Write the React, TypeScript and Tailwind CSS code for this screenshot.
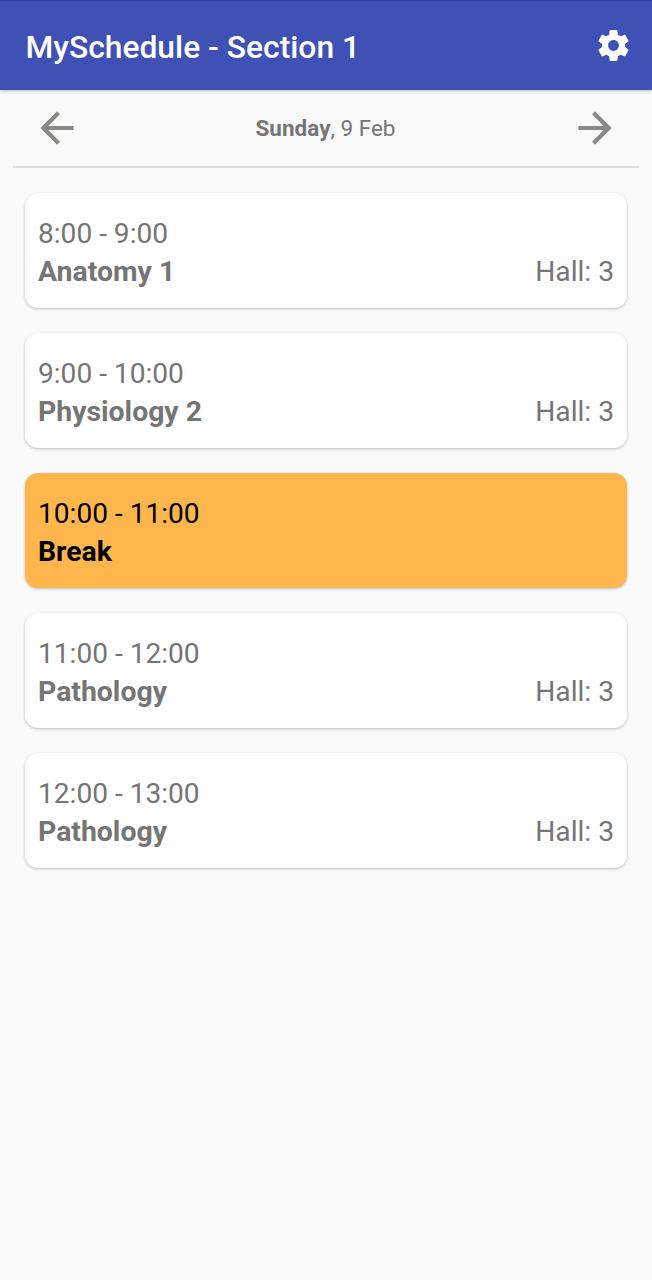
const GEAR =
  "M19.43 12.98c.04-.32.07-.64.07-.98s-.03-.66-.07-.98l2.11-1.65c.19-.15.24-.42.12-.64l-2-3.46c-.12-.22-.39-.3-.61-.22l-2.49 1c-.52-.4-1.08-.73-1.69-.98l-.38-2.65C14.46 2.18 14.25 2 14 2h-4c-.25 0-.46.18-.49.42l-.38 2.65c-.61.25-1.17.59-1.69.98l-2.49-1c-.23-.09-.49 0-.61.22l-2 3.46c-.13.22-.07.49.12.64l2.11 1.65c-.04.32-.07.65-.07.98s.03.66.07.98l-2.11 1.65c-.19.15-.24.42-.12.64l2 3.46c.12.22.39.3.61.22l2.49-1c.52.4 1.08.73 1.69.98l.38 2.65c.03.24.24.42.49.42h4c.25 0 .46-.18.49-.42l.38-2.65c.61-.25 1.17-.59 1.69-.98l2.49 1c.23.09.49 0 .61-.22l2-3.46c.12-.22.07-.49-.12-.64l-2.11-1.65zM12 15.5c-1.93 0-3.5-1.57-3.5-3.5s1.57-3.5 3.5-3.5 3.5 1.57 3.5 3.5-1.57 3.5-3.5 3.5z";

type Lesson = { time: string; title: string; hall?: string };

const lessons: Lesson[] = [
  { time: "8:00 - 9:00", title: "Anatomy 1", hall: "Hall: 3" },
  { time: "9:00 - 10:00", title: "Physiology 2", hall: "Hall: 3" },
  { time: "10:00 - 11:00", title: "Break" },
  { time: "11:00 - 12:00", title: "Pathology", hall: "Hall: 3" },
  { time: "12:00 - 13:00", title: "Pathology", hall: "Hall: 3" },
];

function Card({ lesson }: { lesson: Lesson }) {
  const tone = lesson.hall ? "bg-white text-[#757575]" : "bg-[#ffb74d] text-black";
  return (
    <li
      className={`flex h-[115px] flex-col rounded-[13px] px-[13px] pt-[22px] text-[28.2px] leading-[38px] shadow-[0_1px_3px_rgba(0,0,0,0.25)] ${tone}`}
    >
      <span className="text-[28.1px]">{lesson.time}</span>
      <div className="flex justify-between">
        <span className="text-[28.4px] font-bold">{lesson.title}</span>
        {lesson.hall && <span>{lesson.hall}</span>}
      </div>
    </li>
  );
}

export default function App() {
  return (
    <div className="flex h-[1280px] w-[652px] flex-col bg-[#fafafa] font-[Roboto,sans-serif]">
      <header className="flex h-[90px] shrink-0 items-center justify-between border-t border-[#303f9f] bg-[#3f51b5] pr-[20px] pl-[25.5px] text-white shadow-[0_1px_4px_rgba(0,0,0,0.25)]">
        <h1 className="pt-[5px] text-[31.8px] font-medium">MySchedule - Section 1</h1>
        <button aria-label="Settings" className="pb-px">
          <svg className="size-[37px]" viewBox="0 0 24 24" fill="currentColor">
            <path d={GEAR} />
          </svg>
        </button>
      </header>
      <nav className="mx-[13px] flex h-[78px] shrink-0 items-center justify-between border-b-2 border-[#dcdcdc] px-[19px] text-[#8b8984]">
        <button aria-label="Previous day">
          <svg className="size-[50px]" viewBox="0 0 24 24" fill="currentColor">
            <path d="M20 11H7.83l5.59-5.59L12 4l-8 8 8 8 1.41-1.41L7.83 13H20v-2z" />
          </svg>
        </button>
        <p className="pt-[2px] pr-px text-[22.5px] text-[#757575]">
          <b>Sunday</b>, 9 Feb
        </p>
        <button aria-label="Next day">
          <svg className="size-[50px]" viewBox="0 0 24 24" fill="currentColor">
            <path d="M12 4l-1.41 1.41L16.17 11H4v2h12.17l-5.58 5.59L12 20l8-8z" />
          </svg>
        </button>
      </nav>
      <ul className="flex flex-col gap-[25px] px-[25px] pt-[25px]">
        {lessons.map((lesson) => (
          <Card key={lesson.time} lesson={lesson} />
        ))}
      </ul>
    </div>
  );
}
